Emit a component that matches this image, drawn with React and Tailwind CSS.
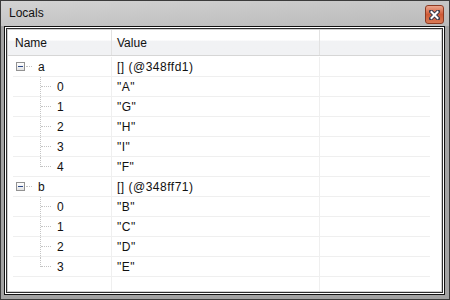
import React from 'react';

const locals = [
  { name: 'a', value: '[] (@348ffd1)', items: ['"A"', '"G"', '"H"', '"I"', '"F"'] },
  { name: 'b', value: '[] (@348ff71)', items: ['"B"', '"C"', '"D"', '"E"'] },
];

function CloseButton() {
  return (
    <div className="w-[19px] h-[19px] rounded-[3px] border border-[#8c3a22] bg-gradient-to-b from-[#eba58c] via-[#cf5a36] to-[#d97a55] flex items-center justify-center">
      <svg width="11" height="10" viewBox="0 0 11 10">
        <path d="M2 1.5 L9 8.5 M9 1.5 L2 8.5" stroke="#3a3a4a" strokeWidth="4" strokeLinecap="square" />
        <path d="M2.5 2 L8.5 8 M8.5 2 L2.5 8" stroke="#ffffff" strokeWidth="2" strokeLinecap="square" />
      </svg>
    </div>
  );
}

function MinusBox() {
  return (
    <div className="w-[9px] h-[9px] border border-[#929292] bg-gradient-to-b from-white to-[#e3e3e3] flex items-center justify-center shrink-0">
      <div className="w-[5px] h-px bg-[#2c4a8a]" />
    </div>
  );
}

// one row: name cell | value cell | empty cell
function Row({ name, value }) {
  return (
    <div className="flex h-[20px] ml-[5px] w-[417px] border-b border-[#efefef]">
      <div className="w-[99px] border-r border-[#efefef] flex items-center">{name}</div>
      <div className="w-[208px] border-r border-[#efefef] flex items-center pl-[5px] tracking-[0.5px]">{value}</div>
      <div className="flex-1" />
    </div>
  );
}

function ChildName({ label, last }) {
  return (
    <div className="flex items-center h-full">
      <div className="relative w-[11px] h-full ml-[27px]">
        <div className={`absolute left-0 top-0 border-l border-dotted border-[#c4c4c4] ${last ? 'h-[10px]' : 'h-full'}`} />
        <div className="absolute left-px top-[9px] w-[10px] border-t border-dotted border-[#c4c4c4]" />
      </div>
      <span className="ml-[6px]">{label}</span>
    </div>
  );
}

function ParentName({ label }) {
  return (
    <div className="flex items-center h-full pl-[3px]">
      <MinusBox />
      <div className="w-[6px] ml-px border-t border-dotted border-[#c4c4c4]" />
      <span className="ml-[6px]">{label}</span>
    </div>
  );
}

export default function App() {
  return (
    <div className="w-[450px] h-[300px] border border-[#3b3b3b] bg-[#a3a3a3] flex flex-col font-['Liberation_Sans',sans-serif] text-[12px] text-[#111] overflow-hidden">
      {/* title bar */}
      <div className="h-[25px] shrink-0 flex justify-between items-start bg-gradient-to-br from-[#d3d3d3] via-[#c6c6c6] to-[#bababa] pr-[5px]">
        <span className="pl-[8px] pt-[5px] leading-[14px]">Locals</span>
        <div className="pt-[4px]">
          <CloseButton />
        </div>
      </div>

      {/* client area with the layered borders */}
      <div className="flex-1 ml-[3px] mr-[4px] mb-[4px] border border-[#111] flex">
        <div className="flex-1 border border-white flex">
          <div className="flex-1 border border-[#2e2e2e] flex">
            <div className="flex-1 border border-[#cfcfcf] bg-white flex flex-col">
              {/* header */}
              <div className="h-[26px] shrink-0 flex border-b border-[#d6d6d6] bg-gradient-to-b from-white from-40% to-[#f1f2f4] to-45%">
                <div className="w-[104px] border-r border-[#e2e2e2] flex items-center pl-[7px]">Name</div>
                <div className="w-[208px] border-r border-[#e2e2e2] flex items-center pl-[5px]">Value</div>
                <div className="flex-1" />
              </div>

              {/* body */}
              <div className="flex-1 flex flex-col pt-px">
                {locals.map((v) => (
                  <React.Fragment key={v.name}>
                    <Row name={<ParentName label={v.name} />} value={v.value} />
                    {v.items.map((it, i) => (
                      <Row
                        key={i}
                        name={<ChildName label={String(i)} last={i === v.items.length - 1} />}
                        value={it}
                      />
                    ))}
                  </React.Fragment>
                ))}
                <div className="flex-1 flex ml-[5px] w-[417px]">
                  <div className="w-[99px] border-r border-[#efefef]" />
                  <div className="w-[208px] border-r border-[#efefef]" />
                </div>
              </div>
            </div>
          </div>
        </div>
      </div>
    </div>
  );
}
